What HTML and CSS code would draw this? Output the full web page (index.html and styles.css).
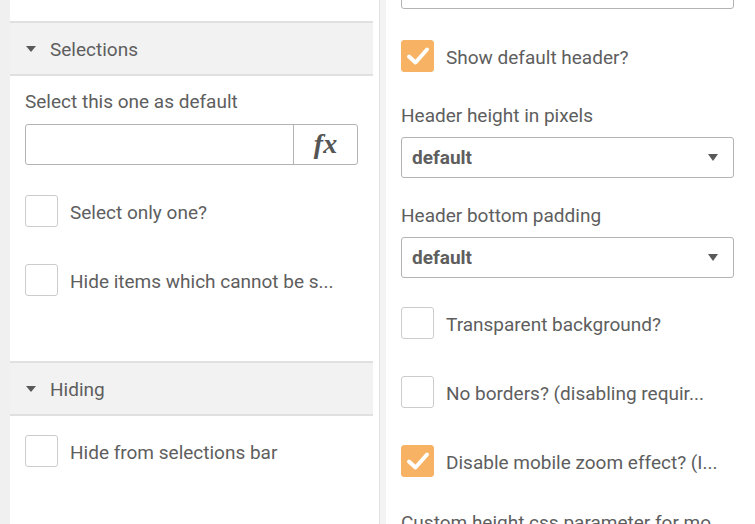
FILE: index.html
```html
<!DOCTYPE html>
<html>
<head>
<meta charset="utf-8">
<link rel="stylesheet" href="styles.css">
</head>
<body>
<div class="app">
  <div class="gutter"></div>
  <div class="left">
    <div class="top-space"></div>
    <div class="sec-head"><span class="caret"></span><span class="sec-title">Selections</span></div>
    <div class="sec-body sel-body">
      <div class="label">Select this one as default</div>
      <div class="expr">
        <div class="expr-input"></div>
        <div class="fx">fx</div>
      </div>
      <div class="cb-row first"><span class="cb"></span><span class="cb-text">Select only one?</span></div>
      <div class="cb-row"><span class="cb"></span><span class="cb-text">Hide items which cannot be s...</span></div>
    </div>
    <div class="sec-head"><span class="caret"></span><span class="sec-title">Hiding</span></div>
    <div class="sec-body hide-body">
      <div class="cb-row"><span class="cb"></span><span class="cb-text">Hide from selections bar</span></div>
    </div>
  </div>
  <div class="sep"></div>
  <div class="right">
    <div class="box top-box"></div>
    <div class="cb-row r-first"><span class="cb checked"><svg viewBox="0 0 33 32" width="33" height="32"><path d="M8 16.5 L14.5 22.5 L26 9.5" fill="none" stroke="#fff" stroke-width="4" stroke-linecap="round" stroke-linejoin="round"/></svg></span><span class="cb-text">Show default header?</span></div>
    <div class="label r-label1">Header height in pixels</div>
    <div class="box select"><span class="sel-val">default</span><span class="arrow"></span></div>
    <div class="label r-label2">Header bottom padding</div>
    <div class="box select"><span class="sel-val">default</span><span class="arrow"></span></div>
    <div class="cb-row r-cb3"><span class="cb"></span><span class="cb-text">Transparent background?</span></div>
    <div class="cb-row"><span class="cb"></span><span class="cb-text">No borders? (disabling requir...</span></div>
    <div class="cb-row"><span class="cb checked"><svg viewBox="0 0 33 32" width="33" height="32"><path d="M8 16.5 L14.5 22.5 L26 9.5" fill="none" stroke="#fff" stroke-width="4" stroke-linecap="round" stroke-linejoin="round"/></svg></span><span class="cb-text">Disable mobile zoom effect? (I...</span></div>
    <div class="label r-label3">Custom height css parameter for mo...</div>
  </div>
</div>
</body>
</html>
```

FILE: styles.css
```css
html, body {
  margin: 0;
  padding: 0;
  background: #f2f2f2;
}

.app {
  display: flex;
  width: 755px;
  height: 524px;
  overflow: hidden;
  font-family: Roboto, "Liberation Sans", sans-serif;
  font-size: 19px;
  color: #5e5e5e;
}

.gutter {
  width: 10px;
  flex: none;
  background: #f0f0f0;
}

.left {
  width: 369px;
  flex: none;
  background: #fff;
}

.top-space {
  height: 21px;
}

.sec-head {
  box-sizing: border-box;
  height: 55px;
  width: 363px;
  background: #f2f2f2;
  border-top: 2px solid #e0e0e0;
  border-bottom: 2px solid #e0e0e0;
  display: flex;
  align-items: center;
  padding-left: 16px;
}

.caret {
  width: 0;
  height: 0;
  border-left: 5px solid transparent;
  border-right: 5px solid transparent;
  border-top: 6px solid #595959;
  margin-right: 14px;
  margin-top: 0;
}

.sec-title {
  line-height: 24px;
  margin-top: 2px;
}

.sec-body {
  padding: 0 15px;
}

.label {
  line-height: 24px;
  white-space: nowrap;
}

.sel-body {
  box-sizing: border-box;
  height: 285px;
  padding-top: 14px;
}

.expr {
  margin-top: 10px;
  box-sizing: border-box;
  width: 333px;
  height: 41px;
  border: 1px solid #b3b3b3;
  border-radius: 3px;
  display: flex;
}

.expr-input {
  flex: 1;
}

.fx {
  width: 64px;
  border-left: 1px solid #b3b3b3;
  display: flex;
  align-items: center;
  justify-content: center;
  font-family: "Liberation Serif", serif;
  font-weight: bold;
  font-style: italic;
  font-size: 28px;
  color: #555;
  padding-bottom: 2px;
  box-sizing: border-box;
}

.cb-row {
  display: flex;
  align-items: center;
  margin-top: 37px;
  height: 32px;
}

.cb-row.first {
  margin-top: 30px;
}

.hide-body .cb-row {
  margin-top: 19px;
}

.cb {
  box-sizing: border-box;
  width: 33px;
  height: 32px;
  flex: none;
  border: 1px solid #cccccc;
  border-radius: 3px;
  margin-right: 12px;
  background: #fff;
}

.cb.checked {
  background: #f7b263;
  border-color: #f7b263;
  position: relative;
}

.cb.checked svg {
  position: absolute;
  left: -1px;
  top: -1px;
}

.cb-text {
  white-space: nowrap;
  line-height: 24px;
  margin-top: 3px;
}

.sep {
  width: 7px;
  flex: none;
  box-sizing: border-box;
  border-left: 1px solid #e2e2e2;
  background: #f3f3f3;
}

.right {
  width: 369px;
  flex: none;
  background: #fff;
  padding-left: 15px;
  box-sizing: border-box;
}

.box {
  box-sizing: border-box;
  width: 333px;
  height: 41px;
  border: 1px solid #b3b3b3;
  border-radius: 3px;
}

.top-box {
  margin-top: -32px;
}

.r-first {
  margin-top: 31px;
}

.r-label1 {
  margin-top: 32px;
}

.r-label2 {
  margin-top: 26px;
}

.select {
  margin-top: 9px;
  display: flex;
  align-items: center;
  justify-content: space-between;
  padding: 0 15px 0 10px;
}

.sel-val {
  font-weight: bold;
  line-height: 24px;
  margin-top: 1px;
}

.arrow {
  width: 0;
  height: 0;
  border-left: 5.5px solid transparent;
  border-right: 5.5px solid transparent;
  border-top: 7px solid #595959;
}

.r-cb3 {
  margin-top: 29px;
}

.r-label3 {
  margin-top: 34px;
}
```
